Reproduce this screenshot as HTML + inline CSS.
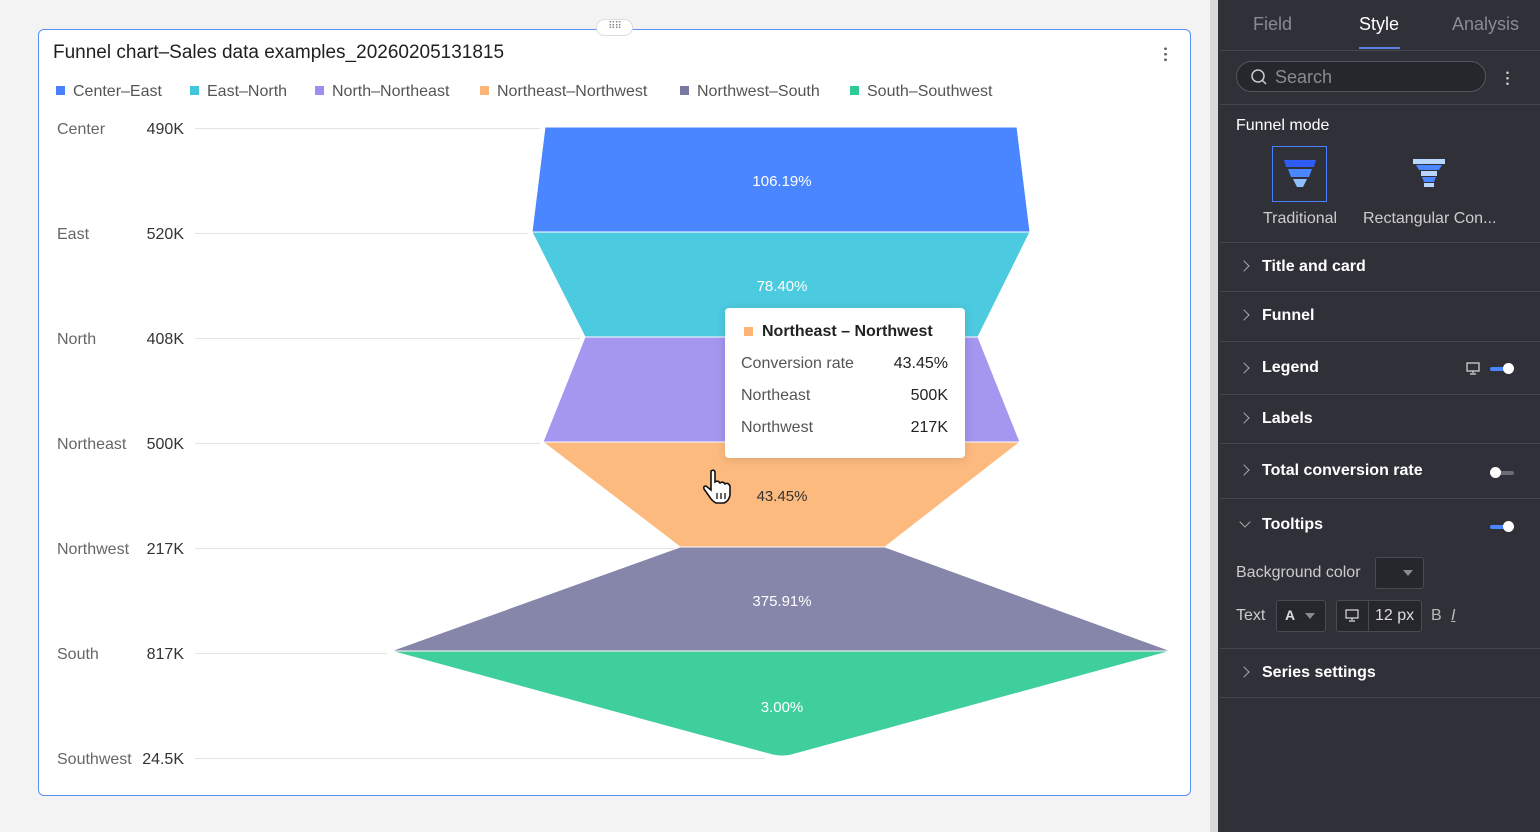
<!DOCTYPE html>
<html><head><meta charset="utf-8"><style>
*{margin:0;padding:0;box-sizing:border-box}
body{width:1540px;height:832px;overflow:hidden;background:#f3f3f3;font-family:"Liberation Sans",sans-serif;position:relative}
.abs{position:absolute}
.card{left:38px;top:29px;width:1153px;height:767px;background:#fff;border:1px solid #5b8ff9;border-radius:6px}
.title{left:53px;top:42px;font-size:19px;color:#1f1f1f}
.leg{top:83px;font-size:16px;color:#555;white-space:nowrap}
.leg i{display:inline-block;width:9px;height:9px;margin-right:8px;vertical-align:1px}
.yl{font-size:16px;color:#666}
.yv{font-size:16px;color:#333;right:1356px;text-align:right}
.panel{left:1218px;top:0;width:322px;height:832px;background:#2f3038}
.strip{left:1210px;top:0;width:8px;height:832px;background:#d9d9d9}
.tab{top:14px;font-size:18px;color:#8a8b92}
.sec{left:1220px;width:320px;border-top:1px solid #45464d}
.st{left:1262px;font-size:16px;color:#fff;font-weight:bold}
.chev{left:1240px;width:8px;height:8px;border-right:1.5px solid #aaa;border-top:1.5px solid #aaa;transform:rotate(45deg)}
.lab{font-size:16px;color:#ccc}
.tog{width:24px;height:4px;border-radius:2px}
.knob{width:11px;height:11px;border-radius:50%;background:#fff}
</style></head><body>
<div class="abs card"></div>
<div class="abs" style="left:596px;top:19px;width:37px;height:17px;border:1px solid #ddd;border-radius:9px;background:#fff;font-size:10px;color:#888;text-align:center;line-height:13px;letter-spacing:-1px">⠿⠿</div>
<div class="abs title">Funnel chart–Sales data examples_20260205131815</div>
<div class="abs" style="left:1164px;top:46px;width:3px;height:16px;background:radial-gradient(circle,#666 1.3px,transparent 1.5px) 0 0/3px 5.5px"></div>
<div class="abs leg" style="left:56px"><i style="background:#4a7fff"></i>Center–East</div>
<div class="abs leg" style="left:190px"><i style="background:#3fc8dc"></i>East–North</div>
<div class="abs leg" style="left:315px"><i style="background:#9d8ef0"></i>North–Northeast</div>
<div class="abs leg" style="left:480px"><i style="background:#fdb477"></i>Northeast–Northwest</div>
<div class="abs leg" style="left:680px"><i style="background:#7779a0"></i>Northwest–South</div>
<div class="abs leg" style="left:850px"><i style="background:#2fc993"></i>South–Southwest</div>

<div class="abs yl" style="left:57px;top:121px">Center</div><div class="abs yv" style="top:121px">490K</div>
<div class="abs yl" style="left:57px;top:226px">East</div><div class="abs yv" style="top:226px">520K</div>
<div class="abs yl" style="left:57px;top:331px">North</div><div class="abs yv" style="top:331px">408K</div>
<div class="abs yl" style="left:57px;top:436px">Northeast</div><div class="abs yv" style="top:436px">500K</div>
<div class="abs yl" style="left:57px;top:541px">Northwest</div><div class="abs yv" style="top:541px">217K</div>
<div class="abs yl" style="left:57px;top:646px">South</div><div class="abs yv" style="top:646px">817K</div>
<div class="abs yl" style="left:57px;top:751px">Southwest</div><div class="abs yv" style="top:751px">24.5K</div>

<svg class="abs" style="left:0;top:0" width="1200" height="800">
<g stroke="#e3e3e3" stroke-width="1">
<line x1="195" y1="128.5" x2="540" y2="128.5"/><line x1="195" y1="233.5" x2="528" y2="233.5"/>
<line x1="195" y1="338.5" x2="580" y2="338.5"/><line x1="195" y1="443.5" x2="540" y2="443.5"/>
<line x1="195" y1="548.5" x2="676" y2="548.5"/><line x1="195" y1="653.5" x2="387" y2="653.5"/>
<line x1="195" y1="758.5" x2="765" y2="758.5"/></g>
<g stroke="#fff" stroke-width="1">
<path d="M545 127 L1017 127 L1030 232 L532 232Z" fill="#4a86ff"/>
<path d="M532 232 L1030 232 L978 337 L585 337Z" fill="#4ccadf"/>
<path d="M585 337 L978 337 L1020 442 L543 442Z" fill="#a596f0"/>
<path d="M543 442 L1020 442 L885 547 L680 547Z" fill="#fdba7f"/>
<path d="M680 547 L885 547 L1171 651 L391 651Z" fill="#8686aa"/>
<path d="M391 651 L1171 651 L795 754 Q782 758 769 754Z" fill="#3fcf9c"/></g>
<g font-family="Liberation Sans" font-size="15" fill="#fff" text-anchor="middle">
<text x="782" y="186">106.19%</text><text x="782" y="291">78.40%</text>
<text x="782" y="501" fill="#333">43.45%</text><text x="782" y="606">375.91%</text><text x="782" y="712">3.00%</text></g>
</svg>

<div class="abs" style="left:725px;top:308px;width:240px;height:150px;background:#fff;border-radius:4px;box-shadow:0 2px 10px rgba(0,0,0,.12)"></div>
<div class="abs" style="left:744px;top:327px;width:9px;height:9px;background:#fdb477"></div>
<div class="abs" style="left:762px;top:323px;font-size:16px;font-weight:bold;color:#222">Northeast – Northwest</div>
<div class="abs" style="left:741px;top:355px;font-size:16px;color:#555">Conversion rate</div><div class="abs" style="right:592px;top:355px;font-size:16px;color:#222">43.45%</div>
<div class="abs" style="left:741px;top:387px;font-size:16px;color:#555">Northeast</div><div class="abs" style="right:592px;top:387px;font-size:16px;color:#222">500K</div>
<div class="abs" style="left:741px;top:419px;font-size:16px;color:#555">Northwest</div><div class="abs" style="right:592px;top:419px;font-size:16px;color:#222">217K</div>
<svg class="abs" style="left:702px;top:468px" width="34" height="38"><path d="M9 3 Q12 1 13 4 L13 14 Q16 12 18 15 Q21 13 23 16 Q26 14 28 18 L28 27 Q27 33 22 35 L14 35 Q10 33 7 28 L2 21 Q1 18 4 18 L9 22Z" fill="#fff" stroke="#111" stroke-width="1.6"/><path d="M15 25v6M19 25v6M23 25v6" stroke="#111" stroke-width="1.3"/></svg>

<div class="abs strip"></div>
<div class="abs panel"></div>
<div class="abs tab" style="left:1253px">Field</div>
<div class="abs tab" style="left:1359px;color:#fff">Style</div>
<div class="abs" style="left:1359px;top:47px;width:41px;height:2px;background:#5b7ee5"></div>
<div class="abs tab" style="left:1452px">Analysis</div>
<div class="abs sec" style="top:50px"></div>
<div class="abs" style="left:1236px;top:61px;width:250px;height:31px;border:1px solid #55565d;border-radius:16px;background:#26272d"></div>
<svg class="abs" style="left:1250px;top:68px" width="18" height="18"><circle cx="8" cy="8" r="6" fill="none" stroke="#ccc" stroke-width="1.5"/><path d="M12.5 12.5L16 16" stroke="#ccc" stroke-width="1.5"/></svg>
<div class="abs" style="left:1275px;top:67px;font-size:18px;color:#8a8b92">Search</div>
<div class="abs" style="left:1506px;top:70px;width:3px;height:16px;background:radial-gradient(circle,#ccc 1.2px,transparent 1.4px) 0 0/3px 5.5px"></div>
<div class="abs sec" style="top:104px"></div>
<div class="abs" style="left:1236px;top:117px;font-size:16px;color:#fff">Funnel mode</div>
<div class="abs" style="left:1272px;top:146px;width:55px;height:56px;border:1px solid #4a7fff"></div>
<svg class="abs" style="left:1283px;top:158px" width="34" height="32"><path d="M1 2h32l-2 7H3Z" fill="#2f5cf5"/><path d="M5 11h24l-3 8H8Z" fill="#4a86ff"/><path d="M10 21h14l-4 8h-6Z" fill="#8fbfff"/></svg>
<svg class="abs" style="left:1412px;top:158px" width="34" height="32"><path d="M1 1h32v5H1Z" fill="#b9d6ff"/><path d="M4 7h26l-3 5H7Z" fill="#4a86ff"/><path d="M9 13h16v5H9Z" fill="#b9d6ff"/><path d="M10 19h14l-2 5H12Z" fill="#4a86ff"/><path d="M12 25h10v4H12Z" fill="#b9d6ff"/></svg>
<div class="abs lab" style="left:1263px;top:210px">Traditional</div>
<div class="abs lab" style="left:1363px;top:210px">Rectangular Con...</div>
<div class="abs sec" style="top:242px"></div>
<div class="abs chev" style="top:262px"></div><div class="abs st" style="top:258px">Title and card</div>
<div class="abs sec" style="top:291px"></div>
<div class="abs chev" style="top:311px"></div><div class="abs st" style="top:307px">Funnel</div>
<div class="abs sec" style="top:341px"></div>
<div class="abs chev" style="top:364px"></div><div class="abs st" style="top:359px">Legend</div>
<svg class="abs" style="left:1466px;top:362px" width="14" height="13"><rect x="1" y="1" width="12" height="8" fill="none" stroke="#ddd" stroke-width="1.2"/><path d="M7 9v2M4 12h6" stroke="#ddd" stroke-width="1.2"/></svg>
<div class="abs tog" style="left:1490px;top:367px;background:#4a86ff"></div><div class="abs knob" style="left:1503px;top:363px"></div>
<div class="abs sec" style="top:394px"></div>
<div class="abs chev" style="top:414px"></div><div class="abs st" style="top:410px">Labels</div>
<div class="abs sec" style="top:443px"></div>
<div class="abs chev" style="top:466px"></div><div class="abs st" style="top:462px">Total conversion rate</div>
<div class="abs tog" style="left:1490px;top:471px;background:#6b6c75"></div><div class="abs knob" style="left:1490px;top:467px"></div>
<div class="abs sec" style="top:498px"></div>
<div class="abs" style="left:1241px;top:518px;width:8px;height:8px;border-right:1.5px solid #aaa;border-bottom:1.5px solid #aaa;transform:rotate(45deg)"></div>
<div class="abs st" style="top:516px">Tooltips</div>
<div class="abs tog" style="left:1490px;top:525px;background:#4a86ff"></div><div class="abs knob" style="left:1503px;top:521px"></div>
<div class="abs lab" style="left:1236px;top:564px">Background color</div>
<div class="abs" style="left:1375px;top:557px;width:49px;height:32px;border:1px solid #4a4b52;border-radius:3px;background:#26272d"></div>
<div class="abs" style="left:1403px;top:570px;border:5px solid transparent;border-top:6px solid #8a8b92"></div>
<div class="abs lab" style="left:1236px;top:607px">Text</div>
<div class="abs" style="left:1276px;top:600px;width:50px;height:32px;border:1px solid #4a4b52;border-radius:3px;background:#26272d"></div>
<div class="abs" style="left:1285px;top:607px;font-size:14px;font-weight:bold;color:#ddd">A</div>
<div class="abs" style="left:1305px;top:613px;border:5px solid transparent;border-top:6px solid #8a8b92"></div>
<div class="abs" style="left:1336px;top:600px;width:86px;height:32px;border:1px solid #4a4b52;border-radius:3px;background:#26272d"></div>
<div class="abs" style="left:1368px;top:600px;width:1px;height:32px;background:#4a4b52"></div>
<svg class="abs" style="left:1345px;top:609px" width="14" height="13"><rect x="1" y="1" width="12" height="8" fill="none" stroke="#ddd" stroke-width="1.2"/><path d="M7 9v2M4 12h6" stroke="#ddd" stroke-width="1.2"/></svg>
<div class="abs lab" style="left:1375px;top:607px;color:#ddd">12 px</div>
<div class="abs lab" style="left:1431px;top:607px;color:#bbb">B</div>
<div class="abs lab" style="left:1451px;top:607px;color:#bbb;font-style:italic;text-decoration:underline">I</div>
<div class="abs sec" style="top:648px"></div>
<div class="abs chev" style="top:668px"></div><div class="abs st" style="top:664px">Series settings</div>
<div class="abs sec" style="top:697px"></div>
</body></html>
